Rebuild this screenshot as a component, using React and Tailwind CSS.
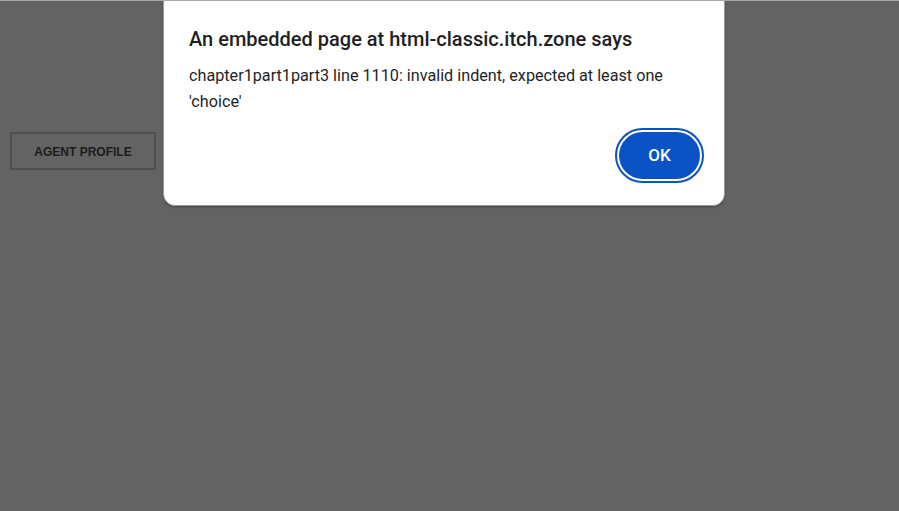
export default function App() {
  return (
    <div className="relative w-[899px] h-[511px] overflow-hidden bg-[#636363] border-t border-[#a9a9a9]" style={{ fontFamily: "Roboto, 'Liberation Sans', sans-serif" }}>
      <div className="pt-[131px] pl-[10px]">
        <button className="w-[146px] h-[38px] border-2 border-[#4f4f4f] text-[12px] font-bold text-[#1c1c1c] leading-[34px] pt-[1px]" style={{ fontFamily: "'Liberation Sans', Arial, sans-serif" }}>
          AGENT PROFILE
        </button>
      </div>
      <div className="absolute left-[163px] top-[-10px] w-[562px] h-[215px] bg-white rounded-[12px] border border-[#9a9a9a] shadow-[0_1px_2px_rgba(0,0,0,0.3)] px-[25px] pt-[33px] flex flex-col">
        <div className="text-[20px] font-medium text-[#1f1f1f] leading-[28px]">An embedded page at html-classic.itch.zone says</div>
        <div className="mt-[10px] text-[16.2px] text-[#1f1f1f] leading-[26px]">
          chapter1part1part3 line 1110: invalid indent, expected at least one 'choice'
        </div>
        <div className="flex justify-end mt-[13px] mr-[-5px]">
          <div className="rounded-full border-2 border-[#0b52c4] p-[2px]">
            <button className="w-[81px] h-[47px] rounded-full bg-[#0b52c4] text-white text-[17px] font-medium">OK</button>
          </div>
        </div>
      </div>
    </div>
  );
}
